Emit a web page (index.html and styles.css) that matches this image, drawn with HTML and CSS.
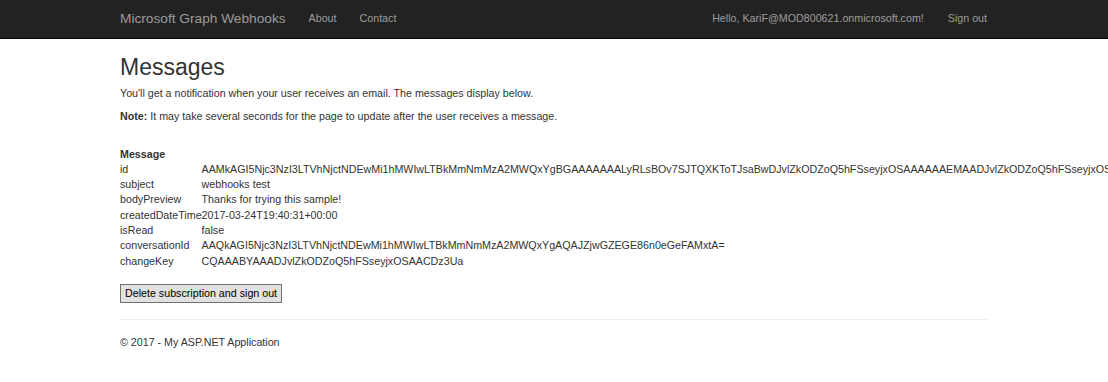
FILE: index.html
```html
<!DOCTYPE html>
<html lang="en">
<head>
    <meta charset="UTF-8">
    <meta name="viewport" content="width=device-width, initial-scale=1.0">
    <title>Messages - Microsoft Graph Webhooks</title>
    <link rel="stylesheet" href="styles.css">
</head>
<body>
    <div class="navbar">
        <div class="container nav-inner">
            <a class="brand" href="#">Microsoft Graph Webhooks</a>
            <ul class="nav">
                <li><a href="#">About</a></li>
                <li><a href="#">Contact</a></li>
            </ul>
            <ul class="nav nav-right">
                <li><span class="hello">Hello, KariF@MOD800621.onmicrosoft.com!</span></li>
                <li><a href="#">Sign out</a></li>
            </ul>
        </div>
    </div>
    <div class="container body-content">
        <h2>Messages</h2>
        <p>You'll get a notification when your user receives an email. The messages display below.</p>
        <p><b>Note:</b> It may take several seconds for the page to update after the user receives a message.</p>
        <div class="message">
            <div class="message-title">Message</div>
            <table class="fields">
                <tr><td>id</td><td>AAMkAGI5Njc3NzI3LTVhNjctNDEwMi1hMWIwLTBkMmNmMzA2MWQxYgBGAAAAAAALyRLsBOv7SJTQXKToTJsaBwDJvlZkODZoQ5hFSseyjxOSAAAAAAEMAADJvlZkODZoQ5hFSseyjxOSAAAAAA==</td></tr>
                <tr><td>subject</td><td>webhooks test</td></tr>
                <tr><td>bodyPreview</td><td>Thanks for trying this sample!</td></tr>
                <tr><td>createdDateTime</td><td>2017-03-24T19:40:31+00:00</td></tr>
                <tr><td>isRead</td><td>false</td></tr>
                <tr><td>conversationId</td><td>AAQkAGI5Njc3NzI3LTVhNjctNDEwMi1hMWIwLTBkMmNmMzA2MWQxYgAQAJZjwGZEGE86n0eGeFAMxtA=</td></tr>
                <tr><td>changeKey</td><td>CQAAABYAAADJvlZkODZoQ5hFSseyjxOSAACDz3Ua</td></tr>
            </table>
        </div>
        <button class="btn-delete">Delete subscription and sign out</button>
        <hr>
        <footer>
            <p>&copy; 2017 - My ASP.NET Application</p>
        </footer>
    </div>
</body>
</html>
```

FILE: styles.css
```css
html, body {
    overflow: hidden;
}
body {
    margin: 0;
    font-family: "Liberation Sans", Arial, sans-serif;
    font-size: 10.7px;
    line-height: 15.3px;
    color: #333333;
    background-color: #ffffff;
}
.container {
    width: 867px;
    margin-left: 120px;
}
.navbar {
    background-color: #222222;
    border-bottom: 1px solid #080808;
    height: 38px;
}
.nav-inner {
    display: flex;
    align-items: center;
    height: 38px;
}
.brand {
    color: #9d9d9d;
    font-size: 13.7px;
    text-decoration: none;
    margin-right: 11.5px;
}
.nav {
    list-style: none;
    margin: 0;
    padding: 0;
    display: flex;
}
.nav li a,
.nav li .hello {
    display: block;
    padding: 0 11.5px;
    color: #9d9d9d;
    text-decoration: none;
}
.nav-right {
    margin-left: auto;
}
.nav-right li .hello {
    padding-right: 0;
}
.nav-right li:last-child a {
    padding-right: 0;
    padding-left: 24px;
}
.body-content {
    padding-top: 12px;
}
h2 {
    font-size: 23px;
    font-weight: 500;
    line-height: 1.1;
    margin: 4px 0 6px;
}
p {
    margin: 0 0 7.7px;
}
.message {
    margin-top: 22px;
}
.message-title {
    font-weight: bold;
}
.fields {
    border-collapse: collapse;
    white-space: nowrap;
}
.fields td {
    padding: 0;
    vertical-align: top;
}
.btn-delete {
    margin-top: 15px;
    font-family: "Liberation Sans", Arial, sans-serif;
    font-size: 10.7px;
    color: #000000;
    background-color: #e1e1e1;
    border: 1px solid #707070;
    padding: 1px 4px;
    height: 19px;
}
hr {
    margin: 16px 0 15px;
    border: 0;
    border-top: 1px solid #eeeeee;
}
footer p {
    margin: 0;
}
```
